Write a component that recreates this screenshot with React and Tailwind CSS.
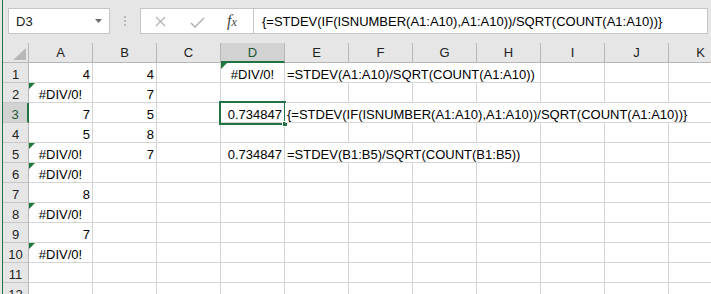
import React from 'react';

const COLS = ['A', 'B', 'C', 'D', 'E', 'F', 'G', 'H', 'I', 'J', 'K'];

// each row: map col -> { v, t: 'num' | 'err' | 'txt', span, tri }
const ROWS = [
  { A: { v: '4', t: 'num' }, B: { v: '4', t: 'num' }, D: { v: '#DIV/0!', t: 'err', tri: true }, E: { v: '=STDEV(A1:A10)/SQRT(COUNT(A1:A10))', t: 'txt', span: 4 } },
  { A: { v: '#DIV/0!', t: 'err', tri: true }, B: { v: '7', t: 'num' } },
  { A: { v: '7', t: 'num' }, B: { v: '5', t: 'num' }, D: { v: '0.734847', t: 'num', sel: true }, E: { v: '{=STDEV(IF(ISNUMBER(A1:A10),A1:A10))/SQRT(COUNT(A1:A10))}', t: 'txt', span: 7 } },
  { A: { v: '5', t: 'num' }, B: { v: '8', t: 'num' } },
  { A: { v: '#DIV/0!', t: 'err', tri: true }, B: { v: '7', t: 'num' }, D: { v: '0.734847', t: 'num' }, E: { v: '=STDEV(B1:B5)/SQRT(COUNT(B1:B5))', t: 'txt', span: 4 } },
  { A: { v: '#DIV/0!', t: 'err', tri: true } },
  { A: { v: '8', t: 'num' } },
  { A: { v: '#DIV/0!', t: 'err', tri: true } },
  { A: { v: '7', t: 'num' } },
  { A: { v: '#DIV/0!', t: 'err', tri: true } },
  {},
  {},
];

const spanClass = { 1: 'col-span-1', 4: 'col-span-4', 7: 'col-span-7' };

function Tri() {
  return (
    <svg className="absolute left-0 top-0" width="6" height="6" viewBox="0 0 6 6">
      <polygon points="0,0 6,0 0,6" fill="#1e7a3c" />
    </svg>
  );
}

function Cell({ cell }) {
  if (!cell) {
    return <div className="h-[20px] border-r border-b border-[#d4d4d4] bg-white" />;
  }
  const align =
    cell.t === 'num' ? 'justify-end pr-[2px]' : cell.t === 'err' ? 'justify-center' : 'justify-start pl-[2px]';
  return (
    <div
      className={`relative h-[20px] flex items-end border-r border-b border-[#d4d4d4] bg-white ${align} ${spanClass[cell.span || 1]}`}
    >
      <span className="leading-[15px] whitespace-nowrap text-black">{cell.v}</span>
      {cell.tri && <Tri />}
      {cell.sel && (
        <div className="absolute -left-[2px] -top-[2px] w-[67px] h-[24px] border-2 border-[#217346]">
          <div className="absolute -right-[4px] -bottom-[4px] w-[6px] h-[6px] bg-[#217346] border border-white" />
        </div>
      )}
    </div>
  );
}

export default function App() {
  return (
    <div className="w-[711px] h-[294px] overflow-hidden bg-[#e6e6e6] flex font-['Liberation_Sans',Arial,sans-serif] text-[13px]">
      <div className="w-[2px] shrink-0" />
      <div className="w-[1px] shrink-0 bg-[#217346]" />
      <div className="flex-1 flex flex-col min-w-0">
        {/* formula bar */}
        <div className="h-[43px] shrink-0 flex items-start pt-[8px] pl-[5px]">
          <div className="w-[102px] h-[26px] bg-white border border-[#c6c6c6] flex items-center pl-[7px] pr-[7px] justify-between">
            <span className="leading-[15px] text-[#222]">D3</span>
            <svg width="7" height="4" viewBox="0 0 7 4">
              <polygon points="0,0 7,0 3.5,4" fill="#6e6e6e" />
            </svg>
          </div>
          <div className="w-[30px] h-[26px] flex flex-col items-center justify-center gap-[2px]">
            <div className="w-[2px] h-[2px] bg-[#b9b9b9]" />
            <div className="w-[2px] h-[2px] bg-[#b9b9b9]" />
            <div className="w-[2px] h-[2px] bg-[#b9b9b9]" />
          </div>
          <div className="w-[568px] h-[26px] bg-white border border-[#c6c6c6] flex">
            <div className="w-[112px] shrink-0 flex items-center">
              <svg className="ml-[14px]" width="11" height="11" viewBox="0 0 11 11">
                <path d="M1 1 L10 10 M10 1 L1 10" stroke="#b4b4b4" strokeWidth="1.3" />
              </svg>
              <svg className="ml-[24px] mt-[2px]" width="15" height="11" viewBox="0 0 15 11">
                <path d="M1 6 L5 10 L14 1" stroke="#b4b4b4" strokeWidth="1.6" fill="none" />
              </svg>
              <span className="ml-[22px] font-['Liberation_Serif',serif] italic text-[16px] leading-[15px] text-[#444]">
                f<span className="text-[12px]">x</span>
              </span>
            </div>
            <div className="flex-1 border-l border-[#c6c6c6] flex items-center pl-[8px]">
              <span className="leading-[15px] whitespace-nowrap text-black">
                {'{=STDEV(IF(ISNUMBER(A1:A10),A1:A10))/SQRT(COUNT(A1:A10))}'}
              </span>
            </div>
          </div>
        </div>

        {/* sheet */}
        <div className="grid grid-cols-[26px_repeat(11,64px)] bg-white">
          <div className="relative h-[20px] bg-[#e6e6e6] border-r border-b border-[#b7b7b7]">
            <svg className="absolute left-[10px] top-[5px]" width="13" height="12" viewBox="0 0 13 12">
              <polygon points="13,0 0,12 13,12" fill="#b7b7b7" />
            </svg>
          </div>
          {COLS.map((c) => (
            <div
              key={c}
              className={`h-[20px] flex items-center justify-center border-r ${
                c === 'D'
                  ? 'bg-[#d2d2d2] border-b-2 border-b-[#217346] border-r-[#b7b7b7] text-[#215732]'
                  : 'bg-[#e6e6e6] border-b border-[#b7b7b7] text-[#222]'
              }`}
            >
              <span className="leading-[15px]">{c}</span>
            </div>
          ))}
          {ROWS.map((row, i) => {
            const cells = [];
            let skip = 0;
            COLS.forEach((c) => {
              if (skip > 0) {
                skip--;
                return;
              }
              const cell = row[c];
              if (cell && cell.span) skip = cell.span - 1;
              cells.push(<Cell key={c} cell={cell} />);
            });
            return (
              <React.Fragment key={i}>
                <div
                  className={`h-[20px] flex items-end justify-center border-b border-[#c8c8c8] ${
                    i === 2
                      ? 'bg-[#d2d2d2] border-r-2 border-r-[#217346] text-[#215732]'
                      : 'bg-[#e6e6e6] border-r border-r-[#b7b7b7] text-[#222]'
                  }`}
                >
                  <span className="leading-[15px]">{i + 1}</span>
                </div>
                {cells}
              </React.Fragment>
            );
          })}
        </div>
      </div>
    </div>
  );
}
